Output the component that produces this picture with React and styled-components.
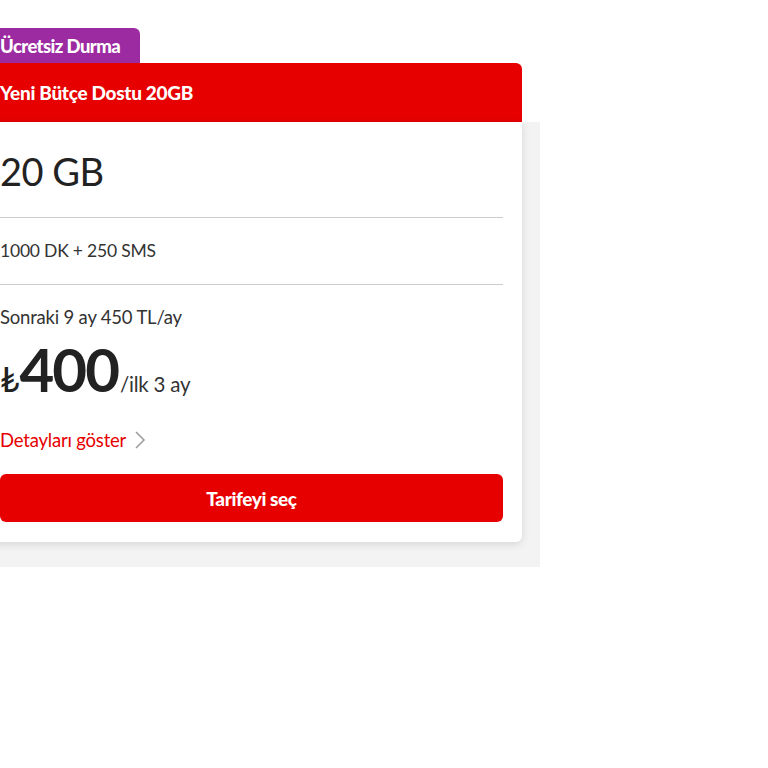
import React from "react";
import styled, { createGlobalStyle } from "styled-components";

const GlobalStyle = createGlobalStyle`
  body {
    margin: 0;
    background: #ffffff;
    font-family: Lato, "Open Sans", sans-serif;
    color: #333333;
  }
`;

const Page = styled("div")`
  width: 560px;
  margin-left: -20px;
  padding-top: 28px;
`;

const Badge = styled("div")`
  display: inline-flex;
  align-items: center;
  height: 35px;
  padding: 0 20px 0 20px;
  background: #9c2aa0;
  color: #ffffff;
  font-size: 18.5px;
  font-weight: 900;
  letter-spacing: -0.6px;
  border-radius: 0 6px 0 0;
`;

const Header = styled("div")`
  width: 542px;
  height: 59px;
  box-sizing: border-box;
  display: flex;
  align-items: center;
  padding: 0 20px;
  background: #e60000;
  color: #ffffff;
  font-size: 19px;
  font-weight: 900;
  letter-spacing: -0.3px;
  border-radius: 0 6px 0 0;
`;

const Shade = styled("div")`
  background: #f3f3f3;
  padding: 0 0 25px 0;
  width: 560px;
`;

const Body = styled("div")`
  width: 542px;
  box-sizing: border-box;
  background: #ffffff;
  padding: 0 19px 20px 20px;
  border-radius: 0 0 6px 6px;
  box-shadow: 0 2px 8px rgba(0, 0, 0, 0.12);
`;

const Data = styled("div")`
  font-size: 38px;
  line-height: 1;
  padding: 30px 0 27px;
  color: #222222;
  letter-spacing: -0.5px;
`;

const Row = styled("div")`
  border-top: 1px solid #cccccc;
  font-size: ${(p) => (p.$last ? "18.5px" : "17.5px")};
  padding: ${(p) => (p.$last ? "21px 0 0" : "22px 0 22px")};
  line-height: 22px;
  color: #333333;
  letter-spacing: -0.2px;
`;

const Price = styled("div")`
  display: flex;
  align-items: baseline;
  margin-top: 6px;
  color: #222222;
`;

const Currency = styled("span")`
  font-size: 34px;
  font-weight: 400;
`;

const Amount = styled("span")`
  font-size: 60px;
  font-weight: 700;
  letter-spacing: -2px;
  line-height: 70px;
`;

const Period = styled("span")`
  font-size: 20.5px;
  margin-left: 2px;
  color: #333333;
`;

const Details = styled("a")`
  display: flex;
  align-items: center;
  gap: 8px;
  margin-top: 25px;
  color: #e60000;
  font-size: 18.5px;
  text-decoration: none;
`;

const SelectButton = styled("button")`
  display: flex;
  align-items: center;
  justify-content: center;
  width: 100%;
  height: 48px;
  margin-top: 23px;
  border: none;
  border-radius: 6px;
  background: #e60000;
  color: #ffffff;
  font-family: Lato, sans-serif;
  font-size: 19px;
  font-weight: 900;
  letter-spacing: -0.4px;
  cursor: pointer;
`;

function App() {
  return (
    <>
      <GlobalStyle />
      <Page>
        <Badge>Ücretsiz Durma</Badge>
        <Header>Yeni Bütçe Dostu 20GB</Header>
        <Shade>
          <Body>
            <Data>20 GB</Data>
            <Row>1000 DK + 250 SMS</Row>
            <Row $last>
              Sonraki 9 ay 450 TL/ay
              <Price>
                <Currency>₺</Currency>
                <Amount>400</Amount>
                <Period>/ilk 3 ay</Period>
              </Price>
              <Details href="#">
                Detayları göster
                <svg width="12" height="20" viewBox="0 0 12 20" fill="none">
                  <path d="M2 2l8 8-8 8" stroke="#999" strokeWidth="1.5" />
                </svg>
              </Details>
              <SelectButton>Tarifeyi seç</SelectButton>
            </Row>
          </Body>
        </Shade>
      </Page>
    </>
  );
}

export default App;
